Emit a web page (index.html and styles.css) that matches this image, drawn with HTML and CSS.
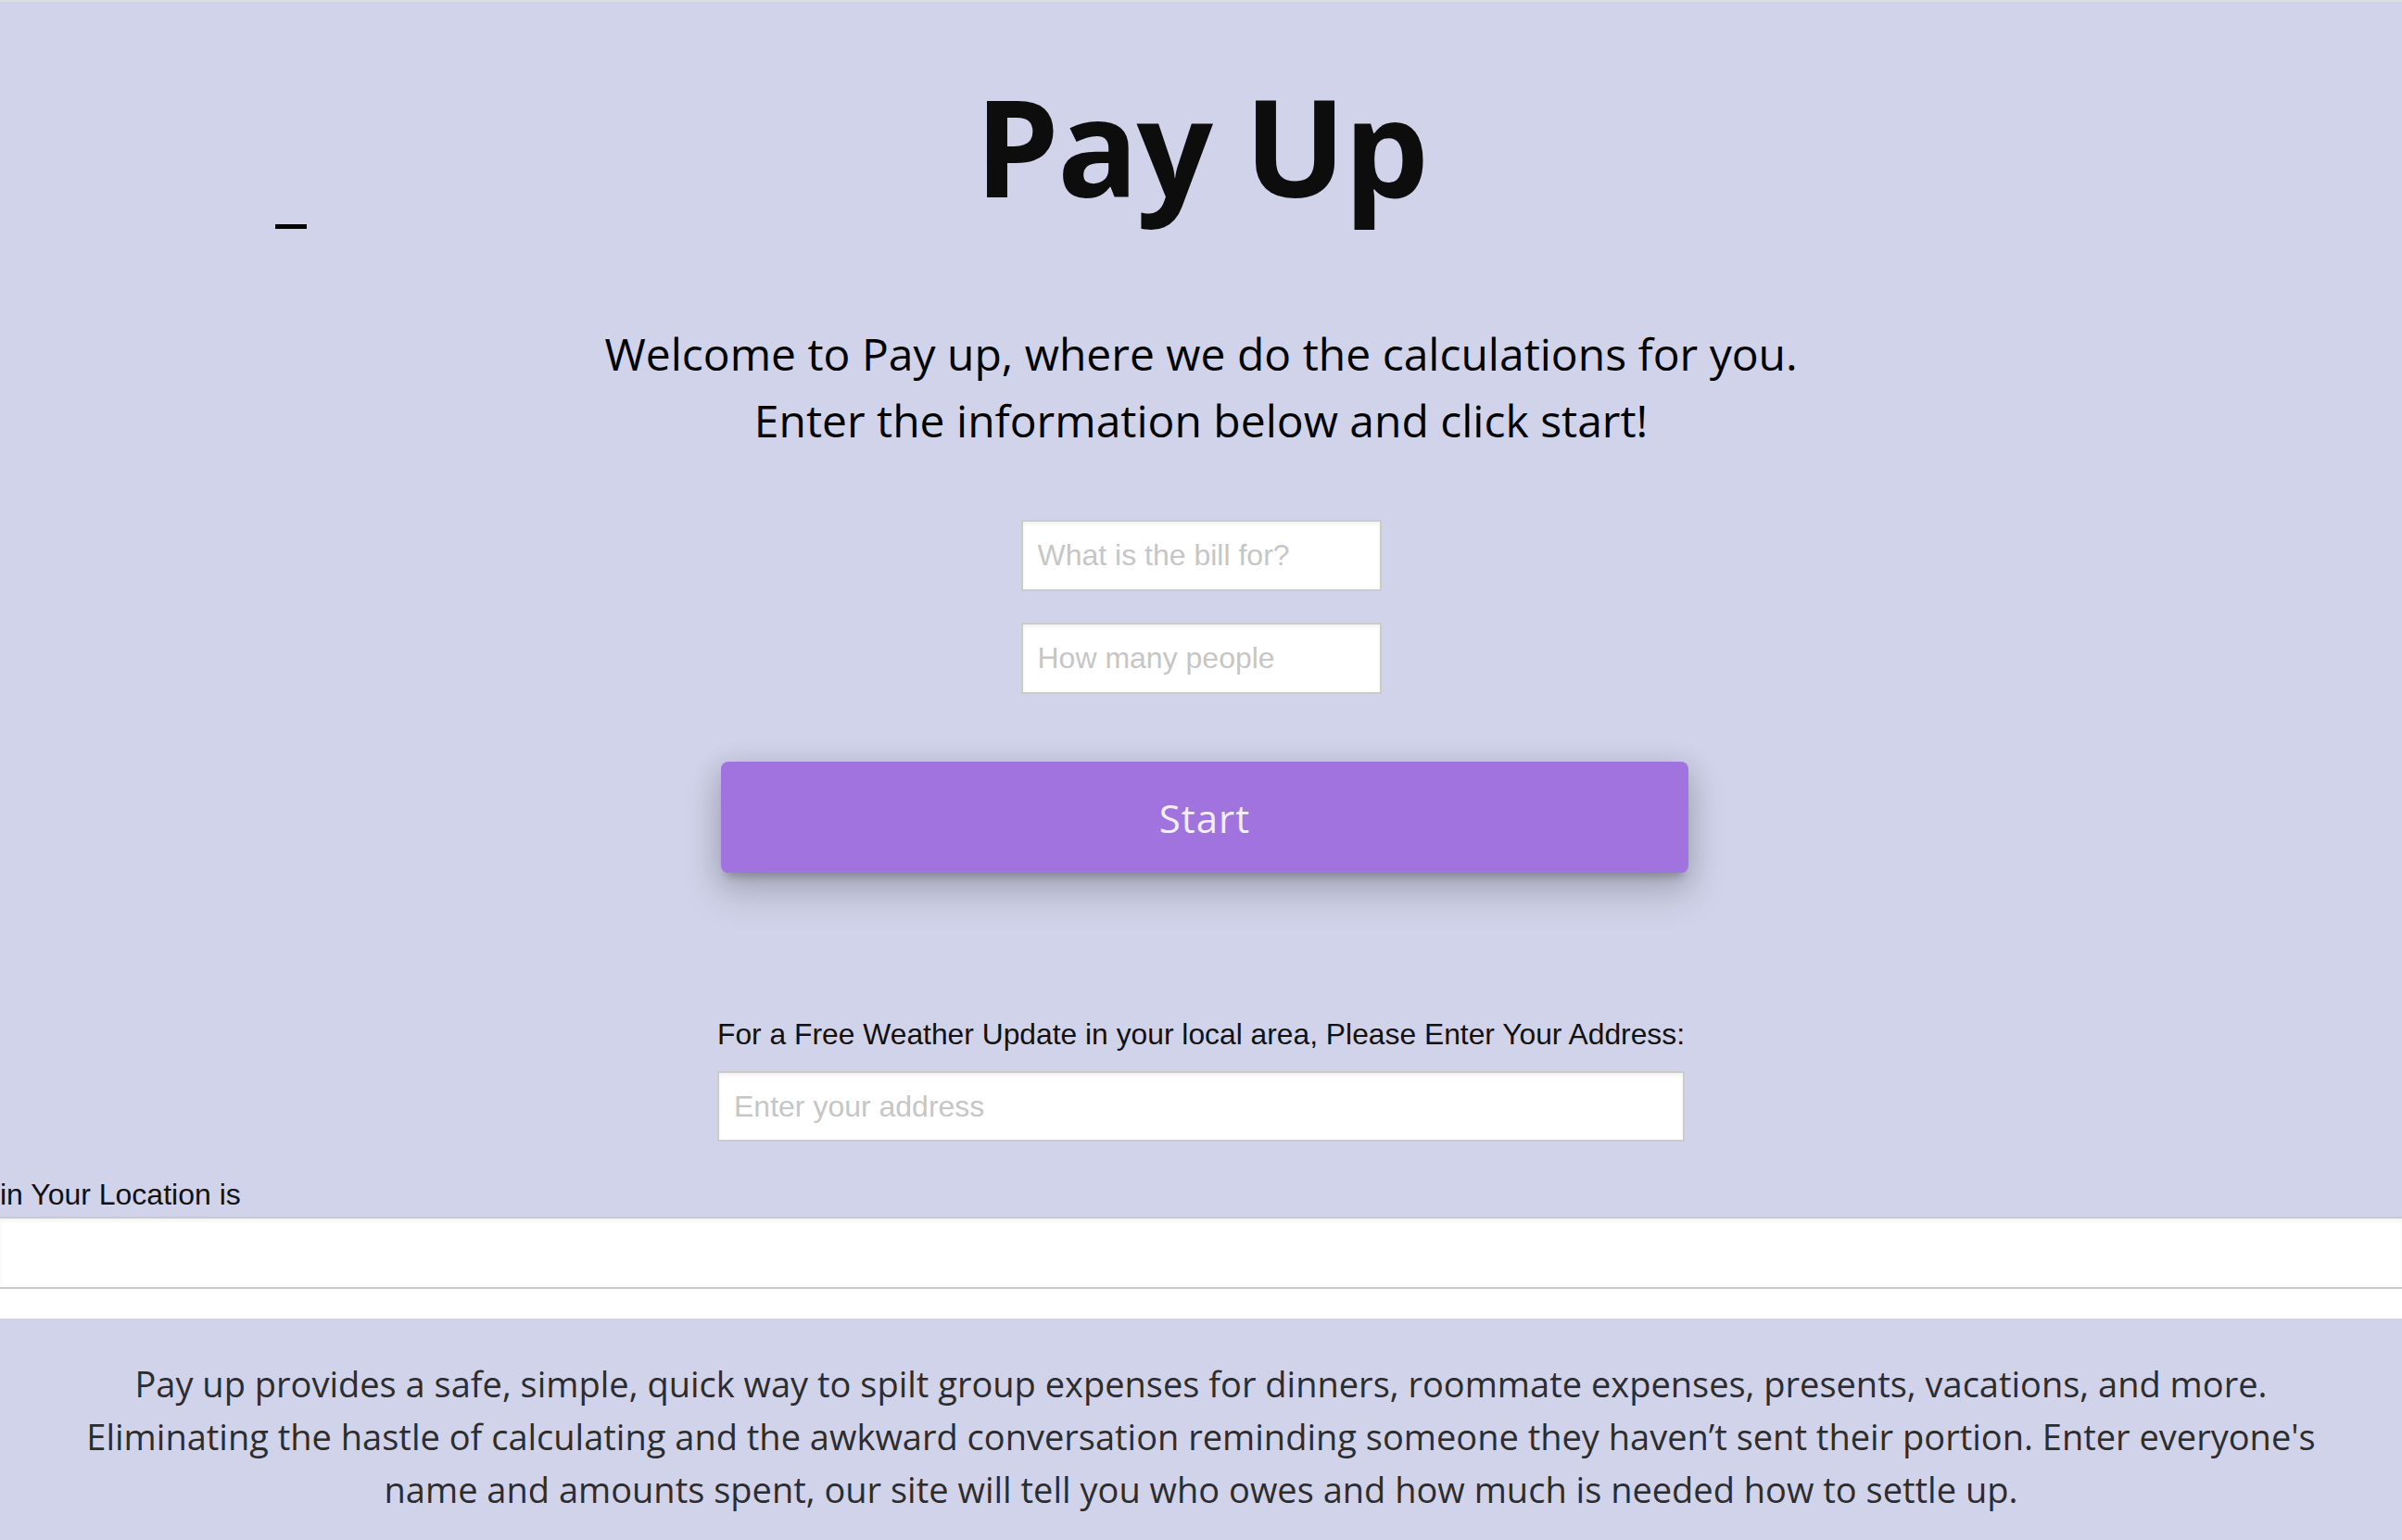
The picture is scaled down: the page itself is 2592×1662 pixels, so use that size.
FILE: index.html
```html
<!DOCTYPE html>
<html lang="en">
<head>
<meta charset="utf-8">
<title>Pay Up</title>
<link rel="stylesheet" href="styles.css">
</head>
<body>
<div class="page">
  <header class="masthead">
    <div class="masthead-side"><span class="dash"></span></div>
    <h1 class="title">Pay Up</h1>
    <div class="masthead-side"></div>
  </header>

  <p class="welcome">Welcome to Pay up, where we do the calculations for you.<br>Enter the information below and click start!</p>

  <form class="bill-form">
    <input class="field field-small" type="text" placeholder="What is the bill for?">
    <input class="field field-small" type="text" placeholder="How many people">
    <button class="start-btn" type="button">Start</button>
  </form>

  <section class="weather">
    <label class="weather-label" for="address">For a Free Weather Update in your local area, Please Enter Your Address:</label>
    <input id="address" class="field field-wide" type="text" placeholder="Enter your address">
  </section>

  <div class="location-label">in Your Location is</div>
  <div class="location-output"></div>
  <div class="white-band"></div>

  <footer class="about">
    <p class="about-text">Pay up provides a safe, simple, quick way to spilt group expenses for dinners, roommate expenses, presents, vacations, and more.<br>Eliminating the hastle of calculating and the awkward conversation reminding someone they haven’t sent their portion. Enter everyone's<br>name and amounts spent, our site will tell you who owes and how much is needed how to settle up.</p>
  </footer>
</div>
</body>
</html>
```

FILE: styles.css
```css
html, body {
  margin: 0;
  padding: 0;
  background: #d1d3ea;
  overflow: hidden;
}

.page {
  border-top: 2px solid #dedede;
  background: #d1d3ea;
  font-family: "Open Sans", "DejaVu Sans", sans-serif;
  color: #000;
}

.masthead {
  display: grid;
  grid-template-columns: 1fr auto 1fr;
  padding-top: 55px;
}

.masthead-side {
  align-self: end;
}

.dash {
  display: block;
  width: 34px;
  height: 5px;
  background: #000;
  margin: 0 0 10px 297px;
}

.title {
  margin: 0;
  font-size: 145px;
  font-weight: 700;
  line-height: 200px;
  color: #0d0d0d;
  letter-spacing: -2px;
  white-space: nowrap;
}

.welcome {
  margin: 89px 0 0;
  text-align: center;
  font-size: 48px;
  line-height: 72px;
}

.bill-form {
  margin: 71px 0 0;
  display: flex;
  flex-direction: column;
  align-items: center;
  gap: 34px;
}

.field {
  box-sizing: border-box;
  display: block;
  background: #fff;
  border: 2px solid #cbcbcb;
  border-radius: 0;
  box-shadow: inset 0 3px 4px rgba(0, 0, 0, 0.05);
  padding: 0 16px;
  font-family: "Liberation Sans", Arial, sans-serif;
  font-size: 32px;
  color: #333;
  outline: none;
  margin: 0;
}

.field::placeholder {
  color: #c6c6c6;
}

.field-small {
  width: 389px;
  height: 77px;
}

.start-btn {
  margin-top: 39px;
  width: 1044px;
  height: 120px;
  border: none;
  border-radius: 8px;
  background: #a073df;
  color: #f2effa;
  font-family: "Open Sans", "DejaVu Sans", sans-serif;
  font-size: 42px;
  letter-spacing: 1px;
  box-shadow: 0 20px 40px 4px rgba(0, 0, 0, 0.15),
              0 6px 28px 4px rgba(0, 0, 0, 0.1),
              0 10px 10px -6px rgba(0, 0, 0, 0.2);
  cursor: pointer;
  transform: translateX(4px);
}

.weather {
  width: 1044px;
  margin: 156px auto 0;
}

.weather-label {
  display: block;
  font-family: "Liberation Sans", Arial, sans-serif;
  font-size: 31.8px;
  line-height: 36px;
  white-space: nowrap;
  color: #111;
}

.field-wide {
  margin-top: 22px;
  width: 100%;
  height: 76px;
}

.location-label {
  margin-top: 39px;
  font-family: "Liberation Sans", Arial, sans-serif;
  font-size: 32px;
  line-height: 36px;
  color: #111;
}

.location-output {
  margin-top: 6px;
  box-sizing: border-box;
  height: 78px;
  background: #fff;
  border-top: 2px solid #c9c9c9;
  border-bottom: 2px solid #c9c9c9;
  box-shadow: inset 0 3px 4px rgba(0, 0, 0, 0.05);
}

.white-band {
  height: 32px;
  background: #fff;
}

.about {
  background: #d1d3ea;
  padding: 42px 0 27px;
}

.about-text {
  margin: 0;
  text-align: center;
  font-size: 38px;
  line-height: 57px;
  color: #2d2d2d;
  white-space: nowrap;
}
```
